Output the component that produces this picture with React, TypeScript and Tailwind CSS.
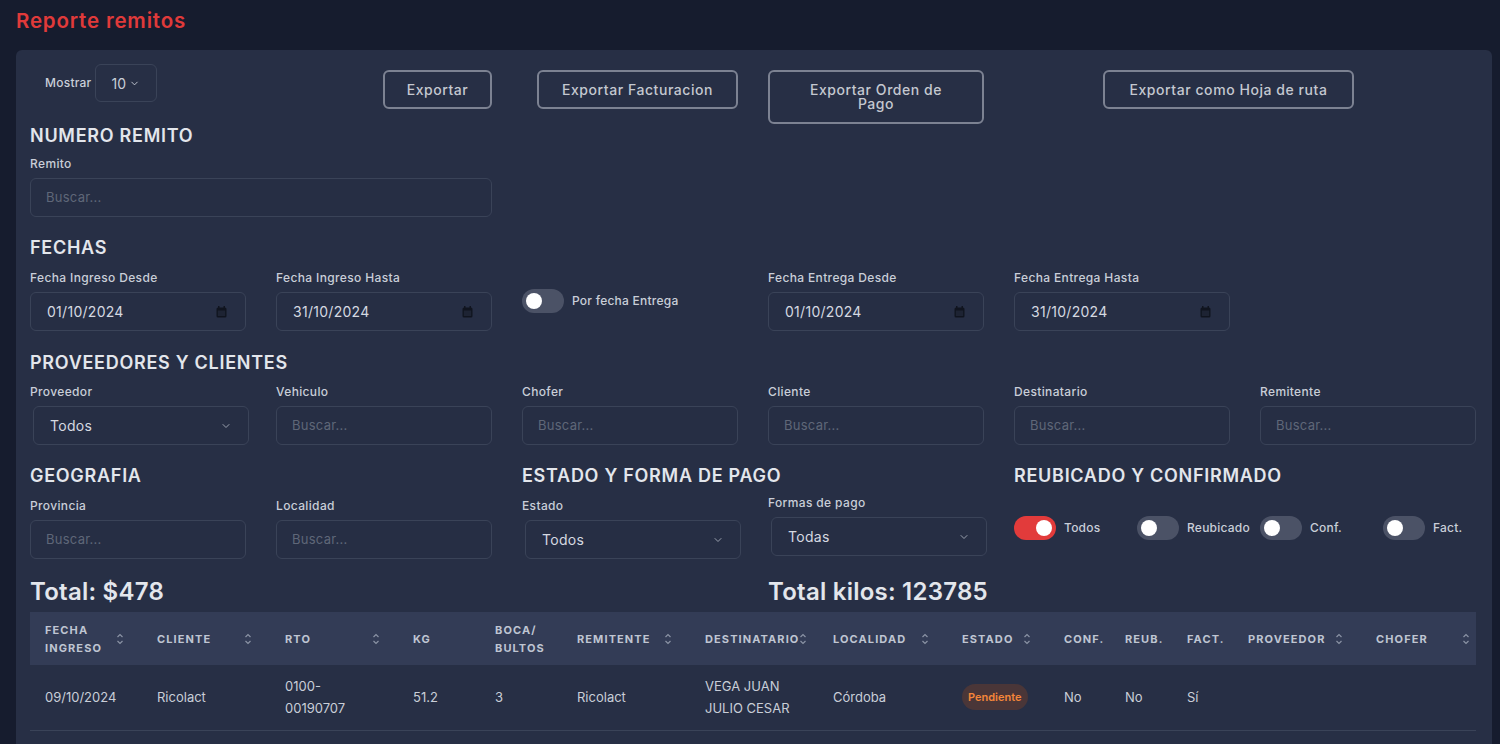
import { ChevronDown } from 'lucide-react';

const font = { fontFamily: 'Inter, "Noto Sans", sans-serif' };

function Label({ children }: { children: React.ReactNode }) {
  return (
    <div className="text-[12px] font-medium tracking-[0.03em] text-[#c9ced8] leading-4 mb-[6px] whitespace-nowrap">
      {children}
    </div>
  );
}

function SearchInput() {
  return (
    <div className="h-[39px] rounded-md border border-[#3a4358] bg-[#262e44] flex items-center px-[15px] text-[13px] tracking-[0.02em] text-[#5f6778]">
      Buscar...
    </div>
  );
}

function SelectBox({ value, className = '' }: { value: string; className?: string }) {
  return (
    <div
      className={`h-[39px] rounded-md border border-[#3a4358] bg-[#262e44] flex items-center justify-between pl-[16px] pr-[16px] text-[14px] tracking-[0.02em] text-[#d5d9e1] ${className}`}
    >
      <span>{value}</span>
      <ChevronDown size={12} className="text-[#9aa1ae]" />
    </div>
  );
}

function CalendarIcon() {
  return (
    <svg width="11" height="12" viewBox="0 0 11 12">
      <rect x="0.5" y="1.5" width="10" height="10" rx="1.5" fill="#10141f" />
      <rect x="2" y="0" width="1.5" height="3" fill="#10141f" />
      <rect x="7.5" y="0" width="1.5" height="3" fill="#10141f" />
      <rect x="1.8" y="4.5" width="7.4" height="5.5" fill="#1d2333" />
    </svg>
  );
}

function DateInput({ value }: { value: string }) {
  return (
    <div className="h-[39px] rounded-md border border-[#3a4358] bg-[#262e44] flex items-center justify-between pl-[16px] pr-[18px] text-[14px] tracking-[0.02em] text-[#d5d9e1]">
      <span>{value}</span>
      <CalendarIcon />
    </div>
  );
}

function Toggle({ on = false }: { on?: boolean }) {
  return (
    <div
      className={`w-[42px] h-[24px] rounded-full flex items-center px-[4px] shrink-0 ${
        on ? 'bg-[#e23b3b] justify-end' : 'bg-[#4b5266] justify-start'
      }`}
    >
      <div className="w-[16px] h-[16px] rounded-full bg-white" />
    </div>
  );
}

function Heading({ children, className = '' }: { children: React.ReactNode; className?: string }) {
  return (
    <h2 className={`text-[18px] font-semibold tracking-[0.04em] text-[#e3e6ec] leading-6 whitespace-nowrap ${className}`}>
      {children}
    </h2>
  );
}

function SortIcon() {
  return (
    <svg width="8" height="14" viewBox="0 0 8 14" className="shrink-0">
      <path d="M1.5 5 L4 2.5 L6.5 5" stroke="#8b93a5" strokeWidth="1.2" fill="none" />
      <path d="M1.5 9 L4 11.5 L6.5 9" stroke="#8b93a5" strokeWidth="1.2" fill="none" />
    </svg>
  );
}

const columns: { label: React.ReactNode; w: string; sort?: boolean }[] = [
  { label: <>FECHA<br />INGRESO</>, w: 'w-[112px]', sort: true },
  { label: 'CLIENTE', w: 'w-[128px]', sort: true },
  { label: 'RTO', w: 'w-[128px]', sort: true },
  { label: 'KG', w: 'w-[82px]' },
  { label: <>BOCA/<br />BULTOS</>, w: 'w-[82px]' },
  { label: 'REMITENTE', w: 'w-[128px]', sort: true },
  { label: 'DESTINATARIO', w: 'w-[128px]', sort: true },
  { label: 'LOCALIDAD', w: 'w-[129px]', sort: true },
  { label: 'ESTADO', w: 'w-[102px]', sort: true },
  { label: 'CONF.', w: 'w-[61px]' },
  { label: 'REUB.', w: 'w-[62px]' },
  { label: 'FACT.', w: 'w-[61px]' },
  { label: 'PROVEEDOR', w: 'w-[128px]', sort: true },
  { label: 'CHOFER', w: 'w-[115px]', sort: true },
];

const btn =
  'rounded-md border-2 border-[#7c8292] text-[14px] font-medium tracking-[0.04em] text-[#c4c8d0]';

export default function App() {
  const row: React.ReactNode[] = [
    '09/10/2024',
    'Ricolact',
    <>0100-<br />00190707</>,
    '51.2',
    '3',
    'Ricolact',
    <>VEGA JUAN<br />JULIO CESAR</>,
    'Córdoba',
    <span className="inline-block rounded-full bg-[#4a3638] px-[6px] py-[2px] text-[11px] font-semibold text-[#f5863a]">
      Pendiente
    </span>,
    'No',
    'No',
    'Sí',
    '',
    '',
  ];

  return (
    <div className="min-h-[744px] bg-[#161c2e] pl-[16px] pr-[8px] pt-[7px] overflow-hidden" style={font}>
      <h1 className="text-[20.5px] font-semibold tracking-[0.04em] text-[#e03a3a] leading-[28px] mb-[15px]">
        Reporte remitos
      </h1>

      <div className="rounded-md bg-[#272f45] pl-[14px] pr-[16px] pt-[14px] pb-[40px]">
        {/* top bar */}
        <div className="grid grid-cols-6 gap-x-[30px] items-start">
          <div className="flex items-center gap-[4px] pl-[15px]">
            <span className="text-[12px] font-medium tracking-[0.02em] text-[#c9ced8]">Mostrar</span>
            <div className="h-[38px] w-[62px] rounded-md border border-[#3a4358] flex items-center pl-[15px] gap-[3px] text-[14px] text-[#c9ced8]">
              10 <ChevronDown size={11} />
            </div>
          </div>
          <div className="flex justify-end pt-[6px]">
            <button className={`${btn} h-[39px] w-[109px]`}>Exportar</button>
          </div>
          <div className="flex justify-end pt-[6px]">
            <button className={`${btn} h-[39px] w-[201px]`}>Exportar Facturacion</button>
          </div>
          <div className="pt-[6px]">
            <button className={`${btn} h-[54px] w-full leading-[14px] px-[30px]`}>Exportar Orden de Pago</button>
          </div>
          <div className="col-span-2 pt-[6px] pl-[89px]">
            <button className={`${btn} h-[39px] w-[251px]`}>Exportar como Hoja de ruta</button>
          </div>
        </div>

        {/* numero remito */}
        <Heading>NUMERO REMITO</Heading>
        <div className="grid grid-cols-6 gap-x-[30px] mt-[8px]">
          <div className="col-span-2">
            <Label>Remito</Label>
            <SearchInput />
          </div>
        </div>

        {/* fechas */}
        <Heading className="mt-[19px]">FECHAS</Heading>
        <div className="grid grid-cols-6 gap-x-[30px] mt-[10px]">
          <div>
            <Label>Fecha Ingreso Desde</Label>
            <DateInput value="01/10/2024" />
          </div>
          <div>
            <Label>Fecha Ingreso Hasta</Label>
            <DateInput value="31/10/2024" />
          </div>
          <div className="flex items-center gap-[8px]">
            <Toggle />
            <span className="text-[12px] font-medium tracking-[0.02em] text-[#c9ced8]">Por fecha Entrega</span>
          </div>
          <div>
            <Label>Fecha Entrega Desde</Label>
            <DateInput value="01/10/2024" />
          </div>
          <div>
            <Label>Fecha Entrega Hasta</Label>
            <DateInput value="31/10/2024" />
          </div>
        </div>

        {/* proveedores */}
        <Heading className="mt-[20px]">PROVEEDORES Y CLIENTES</Heading>
        <div className="grid grid-cols-6 gap-x-[30px] mt-[9px]">
          <div>
            <Label>Proveedor</Label>
            <SelectBox value="Todos" className="ml-[3px] -mr-[3px]" />
          </div>
          {['Vehiculo', 'Chofer', 'Cliente', 'Destinatario', 'Remitente'].map((l) => (
            <div key={l}>
              <Label>{l}</Label>
              <SearchInput />
            </div>
          ))}
        </div>

        {/* geografia / estado / reubicado */}
        <div className="grid grid-cols-6 gap-x-[30px] mt-[19px]">
          <Heading className="col-span-2">GEOGRAFIA</Heading>
          <Heading className="col-span-2">ESTADO Y FORMA DE PAGO</Heading>
          <Heading className="col-span-2">REUBICADO Y CONFIRMADO</Heading>
        </div>
        <div className="grid grid-cols-6 gap-x-[30px] mt-[10px] items-start">
          <div>
            <Label>Provincia</Label>
            <SearchInput />
          </div>
          <div>
            <Label>Localidad</Label>
            <SearchInput />
          </div>
          <div>
            <Label>Estado</Label>
            <SelectBox value="Todos" className="ml-[3px] -mr-[3px]" />
          </div>
          <div className="-mt-[3px]">
            <Label>Formas de pago</Label>
            <SelectBox value="Todas" className="ml-[3px] -mr-[3px]" />
          </div>
          <div className="col-span-2 flex pt-[18px]">
            {[
              { l: 'Todos', on: true },
              { l: 'Reubicado' },
              { l: 'Conf.' },
              { l: 'Fact.' },
            ].map((t) => (
              <div key={t.l} className="w-[123px] shrink-0 flex items-center gap-[8px]">
                <Toggle on={t.on} />
                <span className="text-[12px] font-medium tracking-[0.02em] text-[#c9ced8]">{t.l}</span>
              </div>
            ))}
          </div>
        </div>

        {/* totals */}
        <div className="grid grid-cols-6 gap-x-[30px] mt-[17px]">
          <div className="col-span-3 text-[24px] font-semibold tracking-[0.01em] text-[#e3e6ec] leading-8">
            Total: $478
          </div>
          <div className="col-span-3 text-[24px] font-semibold tracking-[0.01em] text-[#e3e6ec] leading-8">
            Total kilos: 123785
          </div>
        </div>

        {/* table */}
        <table className="mt-[4px] w-full border-collapse table-fixed">
          <thead>
            <tr className="bg-[#333c56] h-[53px]">
              {columns.map((c, i) => (
                <th key={i} className={`${c.w} p-0 text-left align-middle`}>
                  <div
                    className={`flex items-center justify-between pl-[15px] ${
                      i === columns.length - 1 ? 'pr-[6px]' : 'pr-[18px]'
                    }`}
                  >
                    <span className="text-[11px] font-bold tracking-[0.1em] text-[#bfc5d2] leading-[18px] whitespace-nowrap">
                      {c.label}
                    </span>
                    {c.sort && <SortIcon />}
                  </div>
                </th>
              ))}
            </tr>
          </thead>
          <tbody>
            <tr className="h-[65px] border-b border-[#3a4358]">
              {row.map((v, i) => (
                <td key={i} className="pl-[15px] pr-[6px] text-[13px] text-[#c9ced8] leading-[22px] align-middle">
                  {v}
                </td>
              ))}
            </tr>
          </tbody>
        </table>
      </div>
    </div>
  );
}
